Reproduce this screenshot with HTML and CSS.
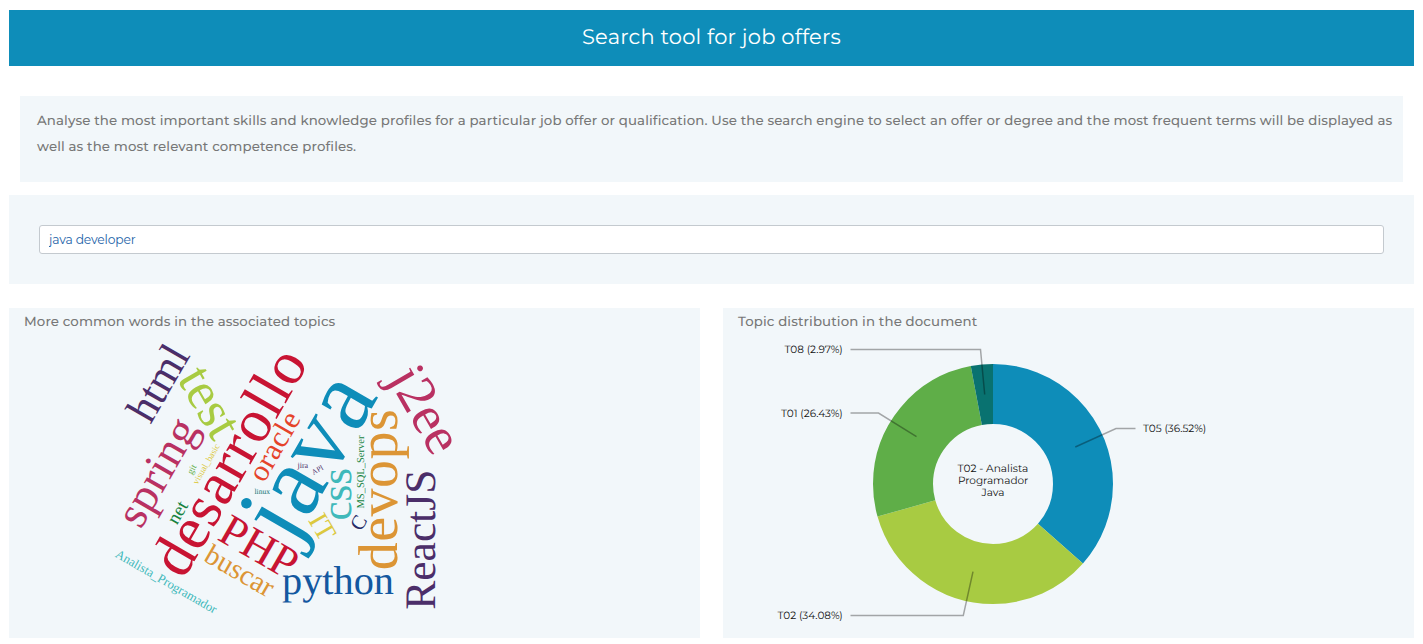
FILE: index.html
```html
<!DOCTYPE html>
<html lang="en">
<head>
<meta charset="utf-8">
<title>Search tool for job offers</title>
<link rel="stylesheet" href="styles.css">
</head>
<body>
<header class="banner"><h1 class="banner-title">Search tool for job offers</h1></header>
<p class="intro"><span class="intro-line">Analyse the most important skills and knowledge profiles for a particular job offer or qualification. Use the search engine to select an offer or degree and the most frequent terms will be displayed as</span> <span class="intro-line">well as the most relevant competence profiles.</span></p>
<section class="search"><input class="search-input" type="text" value="java developer" aria-label="Search"></section>
<main class="panels">
<section class="panel">
<h2 class="panel-title">More common words in the associated topics</h2>
<svg class="chart cloud" viewBox="9 334 691 304">
<g class="purple">
<text transform="translate(150.5 425) rotate(-60)" font-size="44">html</text>
<text transform="translate(435 609.7) rotate(-90)" font-size="43.5">ReactJS</text>
<text transform="translate(297.5 468.3)" font-size="8">jira</text>
<text transform="translate(313.5 475) rotate(-30)" font-size="7.5">API</text>
</g>
<g class="lime"><text transform="translate(176.7 378.7) rotate(60)" font-size="53">test</text></g>
<g class="red">
<text transform="translate(183.5 580.3) rotate(-60)" font-size="61" letter-spacing="0.8">desarrollo</text>
<text transform="translate(216 539) rotate(30)" font-size="45">PHP</text>
</g>
<g class="blue"><text transform="translate(292.3 545.8) rotate(-60)" font-size="100" letter-spacing="2">java</text></g>
<g class="vermilion"><text transform="translate(264 483.5) rotate(-60)" font-size="30" letter-spacing="0.3">oracle</text></g>
<g class="magenta">
<text transform="translate(140.8 530) rotate(-60)" font-size="46" letter-spacing="0.4">spring</text>
<text transform="translate(387.3 378.6) rotate(60)" font-size="55">j2ee</text>
</g>
<g class="yellow">
<text transform="translate(197.5 485) rotate(-60)" font-size="9.1">visual_basic</text>
<text transform="translate(307.8 520) rotate(60)" font-size="28">IT</text>
</g>
<g class="leaf"><text transform="translate(192 475) rotate(-60)" font-size="9.3">git</text></g>
<g class="green">
<text transform="translate(177 525.5) rotate(-60)" font-size="19">net</text>
<text transform="translate(364 508.5) rotate(-90)" font-size="10.5">MS_SQL_Server</text>
</g>
<g class="aqua">
<text transform="translate(114.5 556.5) rotate(30)" font-size="12.7">Analista_Programador</text>
<text transform="translate(351.3 520.5) rotate(-90)" font-size="43">css</text>
</g>
<g class="orange">
<text transform="translate(202.5 560.3) rotate(30)" font-size="28.8">buscar</text>
<text transform="translate(397.3 570.3) rotate(-90)" font-size="56" letter-spacing="0.5">devops</text>
</g>
<g class="royal"><text transform="translate(282 594)" font-size="40.3">python</text></g>
<g class="navy"><text transform="translate(361 532) rotate(-60)" font-size="20.5">C</text></g>
<g class="teal"><text transform="translate(254.5 494.3)" font-size="7.5">linux</text></g>
</svg>
</section>
<section class="panel">
<h2 class="panel-title">Topic distribution in the document</h2>
<svg class="chart" viewBox="723 334 691 304">
<g class="ring" transform="rotate(-90 993 484)">
<circle class="slice slice-t05" cx="993" cy="484" r="90" pathLength="100" stroke-dasharray="36.52 63.48"/>
<circle class="slice slice-t02" cx="993" cy="484" r="90" pathLength="100" stroke-dasharray="34.08 65.92" stroke-dashoffset="-36.52"/>
<circle class="slice slice-t01" cx="993" cy="484" r="90" pathLength="100" stroke-dasharray="26.43 73.57" stroke-dashoffset="-70.6"/>
<circle class="slice slice-t08" cx="993" cy="484" r="90" pathLength="100" stroke-dasharray="2.97 97.03" stroke-dashoffset="-97.03"/>
</g>
<g class="leader">
<path d="M850.5 349.5H980.5L984.7 394.5"/>
<path d="M850.5 413H878.5L916.5 436.7"/>
<path d="M1135.5 428.5H1116L1075.3 447"/>
<path d="M850.5 615.5H963.3L973 571.7"/>
</g>
<g class="label">
<text x="784.5" y="353" textLength="58.3" lengthAdjust="spacingAndGlyphs">T08 (2.97%)</text>
<text x="781" y="417" textLength="61.8" lengthAdjust="spacingAndGlyphs">T01 (26.43%)</text>
<text x="1143" y="432" textLength="63.3" lengthAdjust="spacingAndGlyphs">T05 (36.52%)</text>
<text x="777.5" y="619" textLength="65.3" lengthAdjust="spacingAndGlyphs">T02 (34.08%)</text>
<text x="957.5" y="472" textLength="70.8" lengthAdjust="spacingAndGlyphs">T02 - Analista</text>
<text x="958" y="484" textLength="70.3" lengthAdjust="spacingAndGlyphs">Programador</text>
<text x="981.5" y="496" textLength="23" lengthAdjust="spacingAndGlyphs">Java</text>
</g>
</svg>
</section>
</main>
</body>
</html>
```
FILE: styles.css
```css
* { box-sizing: border-box; }
body {
  margin: 0;
  padding: 10px 9px 6px;
  background: #fff;
  color: #777;
  font-family: Montserrat, Inter, sans-serif;
  text-rendering: geometricPrecision;
  overflow: hidden;
}
.banner {
  height: 56px;
  display: flex;
  align-items: center;
  justify-content: center;
  background: #0e8db9;
  padding-bottom: 1px;
}
.banner-title {
  margin: 0;
  color: #fff;
  font-size: 21px;
  font-weight: 400;
  letter-spacing: 0.19px;
  white-space: nowrap;
}
.intro {
  margin: 30px 11px 13px;
  height: 86px;
  padding: 12px 0 0 17px;
  background: #f2f7fa;
  font-size: 13.3px;
  font-weight: 500;
  line-height: 26px;
  letter-spacing: 0.122px;
  white-space: nowrap;
}
.intro-line { display: block; }
.search {
  height: 89px;
  padding: 30px;
  background: #f2f7fa;
}
.search-input {
  display: block;
  width: 100%;
  height: 29px;
  padding: 0 9px;
  border: 1px solid #c4cacf;
  border-radius: 3px;
  background: #fff;
  color: #1c62a8;
  font: 400 12.3px Montserrat, Inter, sans-serif;
  letter-spacing: -0.15px;
}
.panels {
  display: grid;
  grid-template-columns: 1fr 1fr;
  gap: 23px;
  margin-top: 24px;
}
.panel { height: 330px; background: #f2f7fa; }
.panel-title {
  margin: 0;
  height: 26px;
  padding: 1px 0 0 15px;
  font-size: 13.3px;
  font-weight: 500;
  line-height: 26px;
  letter-spacing: 0.12px;
}
.chart { display: block; width: 691px; height: 304px; }
.cloud { font-family: "Liberation Serif", serif; }
.purple { fill: #4b2e69; }
.lime { fill: #a8cb42; }
.red { fill: #c81433; }
.blue { fill: #0e8db9; }
.vermilion { fill: #e5432a; }
.magenta { fill: #b93162; }
.yellow { fill: #dcc93f; }
.leaf { fill: #5fae48; }
.green { fill: #17833f; }
.aqua { fill: #3fb9ba; }
.orange { fill: #dc9535; }
.royal { fill: #1358a0; }
.navy { fill: #252a66; }
.teal { fill: #097270; }
.slice { fill: none; stroke-width: 60; }
.slice-t05 { stroke: #0e8db9; }
.slice-t02 { stroke: #a8cb42; }
.slice-t01 { stroke: #5fae48; }
.slice-t08 { stroke: #097270; }
.leader { fill: none; stroke: #000; stroke-opacity: 0.33; stroke-width: 1.5; }
.label { fill: #111; font-size: 10.5px; }
```
